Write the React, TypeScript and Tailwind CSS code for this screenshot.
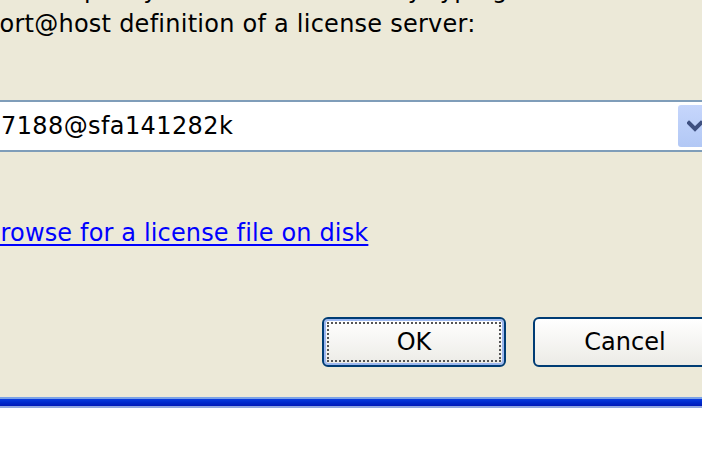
import React from "react";

export default function App() {
  return (
    <div
      className="w-[702px] h-[471px] overflow-hidden bg-white flex flex-col"
      style={{ fontFamily: '"DejaVu Sans", Verdana, sans-serif' }}
    >
      <div className="h-[397px] bg-[#ECE9D8] flex flex-col overflow-hidden">
        <div className="-ml-[16px] flex flex-col">
          <div className="-mt-[24px] h-[28px] text-[24px] leading-[28px] text-black whitespace-nowrap tracking-[0.25px]">
            Please specify the license server by typing the
          </div>
          <div className="h-[40px] text-[24px] leading-[40px] text-black whitespace-nowrap tracking-[0.25px]">
            port@host definition of a license server:
          </div>
          <div className="mt-[56px] h-[52px] flex items-stretch border-2 border-[#7F9DB9] bg-white w-[740px]">
            <div className="flex-1 flex items-center pl-[15px] text-[24px] text-black whitespace-nowrap tracking-[0.4px]">
              7188@sfa141282k
            </div>
            <div className="w-[41px] my-[3px] mr-[3px] rounded-[3px] bg-gradient-to-b from-[#C6D6FC] to-[#B2C8F5] flex items-center pl-[9px]">
              <svg width="16" height="12" viewBox="0 0 16 12">
                <path d="M2 3 L8 9 L14 3" stroke="#3E5080" strokeWidth="4" fill="none" strokeLinecap="square" />
              </svg>
            </div>
          </div>
          <div className="mt-[63px] h-[36px] flex items-center">
            <span className="text-[24px] text-[#0000FF] underline underline-offset-[3px] whitespace-nowrap tracking-[0.15px]">
              Browse for a license file on disk
            </span>
          </div>
        </div>
        <div className="mt-[66px] flex gap-[27px] pl-[322px]">
          <button className="w-[184px] h-[50px] shrink-0 rounded-[6px] border-2 border-[#003C74] bg-gradient-to-b from-[#FFFFFF] to-[#ECEBE6] p-[3px] shadow-[inset_0_0_0_2px_#9DB8F0]">
            <div className="w-full h-full border-2 border-dotted border-[#555] flex items-center justify-center text-[24px] text-black">
              OK
            </div>
          </button>
          <button className="w-[184px] h-[50px] shrink-0 rounded-[6px] border-2 border-[#003C74] bg-gradient-to-b from-[#FFFFFF] to-[#ECEBE6] flex items-center justify-center text-[24px] text-black">
            Cancel
          </button>
        </div>
      </div>
      <div className="h-[2px] bg-[#7BA2E7]" />
      <div className="h-[7px] bg-gradient-to-b from-[#0A3ADE] via-[#0029CC] to-[#0019B8]" />
      <div className="h-[2px] bg-[#8FA6E0]" />
      <div className="flex-1 bg-white" />
    </div>
  );
}
